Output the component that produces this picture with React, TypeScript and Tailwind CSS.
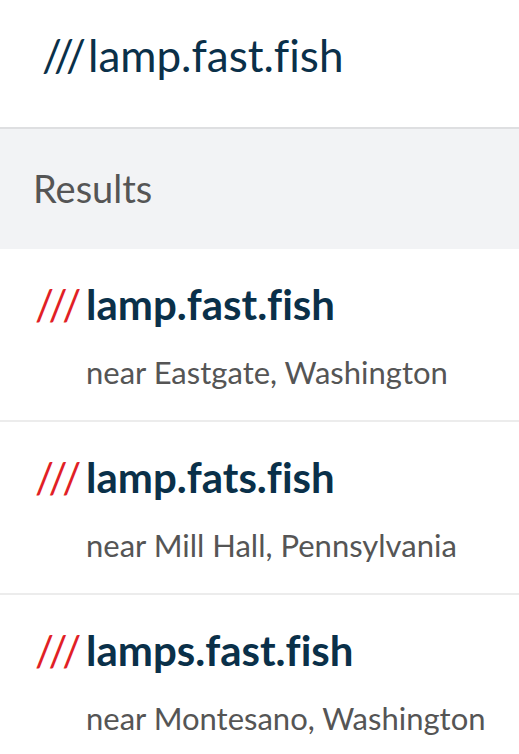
const results = [
  { words: "lamp.fast.fish", place: "near Eastgate, Washington" },
  { words: "lamp.fats.fish", place: "near Mill Hall, Pennsylvania" },
  { words: "lamps.fast.fish", place: "near Montesano, Washington" },
];

const font = { fontFamily: "Lato, 'Open Sans', sans-serif" };

export default function App() {
  return (
    <main
      className="w-[519px] h-[754px] overflow-hidden bg-white [font-variant-ligatures:none]"
      style={font}
    >
      <header className="h-[129px] pl-[42px] pt-[33px] border-b-2 border-[#dedfe1]">
        <h1 className="flex text-[44px] leading-none text-[#0a3049]">
          <span className="tracking-[2px]">///</span>
          <span>lamp.fast.fish</span>
        </h1>
      </header>

      <section className="h-[120px] bg-[#f2f3f5] pl-[33px] pt-[40px]">
        <h2 className="text-[38px] leading-none text-[#555555]">Results</h2>
      </section>

      <ul>
        {results.map((r) => (
          <li
            key={r.words}
            className="h-[173px] border-b-2 border-[#ececec] pl-[35px] pt-[34px]"
          >
            <div className="flex items-baseline text-[42px] leading-none">
              <span className="text-[#e11f26] w-[51px] tracking-[4px]">///</span>
              <span className="font-bold text-[#0a3049]">{r.words}</span>
            </div>
            <p className="pl-[51px] mt-[32px] text-[31px] leading-none text-[#555555]">
              {r.place}
            </p>
          </li>
        ))}
      </ul>
    </main>
  );
}
